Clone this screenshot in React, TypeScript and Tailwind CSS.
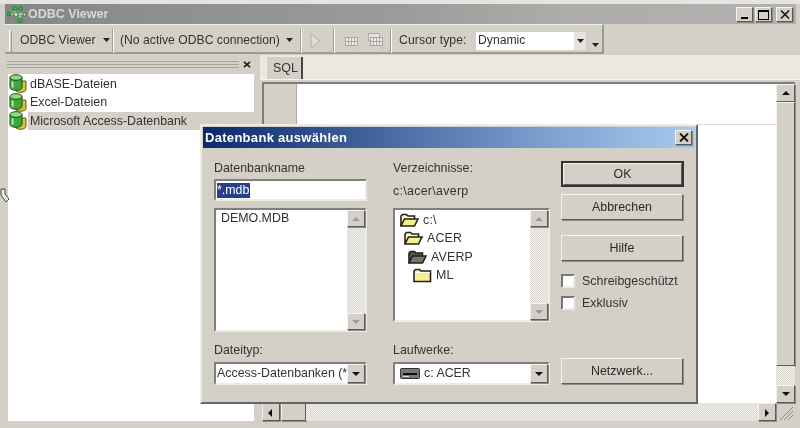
import React from "react";

const sans = "font-['Liberation_Sans',Arial,sans-serif]";
const raised =
  "border border-t-[#f4f3f0] border-l-[#f4f3f0] border-r-[#5c5c5c] border-b-[#5c5c5c] bg-[#d4d0c8] shadow-[1px_1px_0_#8a8a86]";
const sunken =
  "border-2 border-t-[#7f7f7c] border-l-[#7f7f7c] border-r-[#ecebe6] border-b-[#ecebe6] bg-white";
const dither =
  "bg-[repeating-conic-gradient(#f1f0ec_0%_25%,#d9d7d0_0%_50%)] bg-[length:2px_2px]";

const Arrow = ({ dir, muted }: { dir: "up" | "down" | "left" | "right"; muted?: boolean }) => {
  const points = {
    up: "1,6 9,6 5,2",
    down: "1,2 9,2 5,6",
    left: "6,1 6,9 2,5",
    right: "3,1 3,9 7,5",
  }[dir];
  return (
    <svg width="10" height="10" viewBox="0 0 10 8" fill={muted ? "#9a9a96" : "#111"}>
      <polygon points={points} />
    </svg>
  );
};

const ScrollButton = ({
  dir,
  muted,
  className = "w-[18px] h-[18px]",
}: {
  dir: "up" | "down" | "left" | "right";
  muted?: boolean;
  className?: string;
}) => (
  <div className={`${raised} ${className} shrink-0 flex items-center justify-center`}>
    <Arrow dir={dir} muted={muted} />
  </div>
);

const DbIcon = () => (
  <svg width="19" height="19" viewBox="0 0 19 19" className="shrink-0">
    <path d="M6 7v8.500c0 1.500 2.600 2.800 5.500 2.800s5.500-1.300 5.500-2.800V7z" fill="#d9c138" stroke="#5f5820" />
    <path d="M1 3.500v10c0 1.500 2.800 2.800 6 2.800s6-1.300 6-2.800v-10z" fill="#3fa83c" stroke="#1d4a1d" />
    <ellipse cx="7" cy="3.500" rx="6" ry="2.800" fill="#8fdc84" stroke="#1d4a1d" />
    <path d="M3.500 7.500v6" stroke="#b8eeb0" strokeWidth="2" />
  </svg>
);

const Folder = ({ open, dark }: { open?: boolean; dark?: boolean }) => {
  const fill = dark ? "#77766e" : "#f5f08c";
  return (
    <svg width="19" height="15" viewBox="0 0 19 15" className="shrink-0">
      {open ? (
        <>
          <path d="M1 13V3l1.500-1.500h4L8 3h6.500v3" fill={dark ? "#55544e" : "#fbf8c4"} stroke="#222" strokeWidth="1.600" />
          <path d="M1 13l3.500-7h13.500l-3.500 7z" fill={fill} stroke="#222" strokeWidth="1.600" />
        </>
      ) : (
        <>
          <path d="M1 13.500V3l1.500-1.500h4L8 3h9.500v10.500z" fill={fill} stroke="#222" strokeWidth="1.600" />
          <path d="M2 4.500h15" stroke="#fff" />
        </>
      )}
    </svg>
  );
};

const DlgButton = ({ label, className = "h-[26px]" }: { label: string; className?: string }) => (
  <div className={`${raised} ${className} w-[122px] flex items-center justify-center text-[#2a2a2a]`}>
    {label}
  </div>
);

const Check = ({ label }: { label: string }) => (
  <div className="flex items-center gap-[7px] h-[14px] text-[#333] tracking-[0.05px]">
    <div className="w-[14px] h-[14px] border-2 border-t-[#777] border-l-[#777] border-r-[#ecebe6] border-b-[#ecebe6] bg-white" />
    {label}
  </div>
);

const ToolSep = ({ className = "" }: { className?: string }) => (
  <div className={`w-[2px] h-[24px] shrink-0 border-l border-l-[#9a9a96] border-r border-r-white ${className}`} />
);

const GridIcon = ({ stacked }: { stacked?: boolean }) => (
  <svg width="18" height="18" viewBox="0 0 18 18" fill="none" stroke="#a9a9a4">
    {stacked && <rect x="1.500" y="1.500" width="11" height="7" fill="#e6e4de" />}
    <rect x="3.500" y="5.500" width="12" height="8" fill="#eeece6" />
    <path d="M6.500 6v7M9.500 6v7M12.500 6v7M4 9.500h11" />
    <rect x="15" y="15" width="2" height="2" fill="#c0c0ba" stroke="none" />
  </svg>
);

const Caret = () => (
  <svg width="7" height="4" viewBox="0 0 7 4" fill="#222" className="shrink-0">
    <polygon points="0,0 7,0 3.500,4" />
  </svg>
);

export default function App() {
  return (
    <div className={`${sans} relative w-[800px] h-[428px] overflow-hidden bg-[#d4d0c8] blur-[0.5px] flex flex-col`}>
      {/* Window title */}
      <div className="h-[4px] bg-[#e6e4de]" />
      <div className="ml-[5px] mr-[4px] h-[20px] shrink-0 flex items-center justify-between pr-[3px] bg-[linear-gradient(90deg,#858786,#9b9b9b_50%,#acacaa_70%,#b3b2b2_100%)]">
        <div className="flex items-center pl-[1px]">
          <svg width="22" height="20" viewBox="0 0 22 20" fill="none" stroke="#1f8a2a" strokeWidth="1">
            <path d="M4 10h14M9 5v6M14 11v5" stroke="#dfe5dd" />
            <circle cx="9" cy="4.500" r="2" fill="#35b83a" />
            <circle cx="14.500" cy="4.500" r="2" fill="#35b83a" />
            <circle cx="3" cy="10" r="1.800" fill="#35b83a" />
            <circle cx="10" cy="10.500" r="2" fill="#eaeaea" />
            <circle cx="18.500" cy="10.500" r="1.500" fill="#eaeaea" />
            <circle cx="14" cy="16.500" r="2.200" fill="#35b83a" />
          </svg>
          <span className="text-[12.500px] font-bold text-[#d8d8d8] leading-none">ODBC Viewer</span>
        </div>
        <div className="flex gap-[2px] items-center">
          {["min", "max"].map((k) => (
            <div key={k} className={`${raised} w-[17px] h-[15px] flex items-end justify-center`}>
              {k === "min" ? (
                <div className="w-[7px] h-[2px] bg-black mb-[2px]" />
              ) : (
                <div className="w-[11px] h-[10px] border border-black border-t-2 mb-[1px]" />
              )}
            </div>
          ))}
          <div className={`${raised} w-[17px] h-[15px] ml-[2px] flex items-center justify-center`}>
            <svg width="10" height="9" viewBox="0 0 10 9" stroke="#111" strokeWidth="1.500">
              <path d="M1 0.500l8 8M9 0.500l-8 8" />
            </svg>
          </div>
        </div>
      </div>

      {/* Toolbar */}
      <div className="h-[31px] shrink-0 pl-[5px]">
        <div className="w-[599px] h-[30px] flex items-center pl-[4px] pt-[4px] whitespace-nowrap border-t border-t-[#f1f0ec] border-r-2 border-r-[#9a9a96] border-b-2 border-b-[#9a9a96] text-[12.200px] text-[#333]">
          <div className="w-[3px] h-[22px] shrink-0 border border-[#9a9a96] border-l-white border-t-white" />
          <div className="flex items-center gap-[7px] ml-[8px] w-[85px] shrink-0">
            ODBC Viewer
            <Caret />
          </div>
          <ToolSep className="ml-[7px]" />
          <div className="flex items-center gap-[6px] ml-[6px] w-[172px] shrink-0">
            (No active ODBC connection)
            <Caret />
          </div>
          <ToolSep className="ml-[8px]" />
          <svg width="16" height="18" viewBox="0 0 16 18" className="ml-[6px] shrink-0">
            <path d="M3 2l9 7-9 7z" fill="#dedcd6" stroke="#b0b0aa" />
          </svg>
          <ToolSep className="ml-[9px]" />
          <div className="flex gap-[7px] ml-[7px] shrink-0">
            <GridIcon />
            <GridIcon stacked />
          </div>
          <ToolSep className="ml-[5px]" />
          <span className="ml-[7px] w-[69px] shrink-0 tracking-[0.1px]">Cursor type:</span>
          <div className="ml-[8px] w-[110px] h-[18px] shrink-0 bg-white flex items-center justify-between pl-[2px]">
            Dynamic
            <div className="w-[12px] h-[18px] bg-[#e4e2dc] flex items-center justify-center">
              <Caret />
            </div>
          </div>
          <div className="self-end mb-[5px] ml-[6px]">
            <Caret />
          </div>
        </div>
      </div>

      {/* Main area */}
      <div className="flex-1 flex min-h-0 pb-[7px]">
        <LeftPanel />
        <RightPane />
      </div>

      {/* Resize cursor left behind in the capture */}
      <svg width="10" height="20" viewBox="0 0 10 20" className="absolute left-0 top-[186px]" fill="none" stroke="#444">
        <path d="M1 3v6l5 7 3-3-4-5V3z" fill="#eee" />
      </svg>

      <Dialog />
    </div>
  );
}

function LeftPanel() {
  const rows = ["dBASE-Dateien", "Excel-Dateien", "Microsoft Access-Datenbank"];
  return (
    <div className="w-[260px] shrink-0 flex flex-col pl-[8px] pr-[6px]">
      <div className="h-[19px] shrink-0 flex items-center gap-[3px] -ml-[1px] mr-[3px]">
        <div className="flex-1 h-[7px] border-y border-[#a5a39d] relative">
          <div className="absolute left-0 right-0 top-[2px] h-px bg-[#a5a39d]" />
        </div>
        <svg width="8" height="7" viewBox="0 0 9 8" stroke="#222" strokeWidth="2" className="ml-[1px]">
          <path d="M1 1l7 6M8 1l-7 6" />
        </svg>
      </div>
      <div className="flex-1 bg-white pl-[1px] text-[12.400px] text-[#333] flex flex-col">
        {rows.map((label, i) => (
          <div key={label} className="h-[18px] mt-[0.500px] flex items-center gap-0">
            <DbIcon />
            <span className={`${i === 2 ? "bg-[#d4d0c8] flex-1" : ""} leading-[18px] pl-[2px]`}>{label}</span>
          </div>
        ))}
      </div>
    </div>
  );
}

function RightPane() {
  return (
    <div className="flex-1 min-w-0 flex flex-col">
      {/* Tab strip */}
      <div className="h-[25px] shrink-0 bg-[#ece7df] flex items-end border-b border-b-[#f6f5f1]">
        <div className="ml-[7px] w-[36px] h-[22px] bg-[#d4d0c8] border-r-2 border-r-[#444] flex items-center pl-[6px] text-[12.500px] text-[#333]">
          SQL
        </div>
      </div>
      {/* Editor */}
      <div className="flex-1 min-h-0 flex flex-col pr-[5px] pt-[2px] pl-[2px]">
        <div className="flex-1 min-h-0 flex border-t-2 border-l-2 border-[#7d7d7a]">
          <div className="w-[33px] shrink-0 bg-[#d4d0c8] border-r border-r-[#aaa]" />
          <div className="flex-1 min-w-0 bg-white">
            <div className="h-[41px] border-b border-b-[#dddcd8]" />
          </div>
          <div className="w-[19px] shrink-0 flex flex-col bg-[#d4d0c8]">
            <ScrollButton dir="up" className="w-[19px] h-[18px]" />
            <div className={`${raised} w-[19px] h-[264px]`} />
            <div className={`flex-1 ${dither}`} />
            <ScrollButton dir="down" className="w-[19px] h-[18px]" />
          </div>
        </div>
        <div className="h-[18px] shrink-0 flex">
          <ScrollButton dir="left" />
          <div className={`${raised} w-[25px] h-[18px] ml-[1px]`} />
          <div className={`flex-1 ${dither}`} />
          <ScrollButton dir="right" />
          <svg width="19" height="18" viewBox="0 0 19 18" stroke="#8a8a86" fill="none">
            <path d="M4 17L17 4M8 17L17 8M12 17l5-5" />
          </svg>
        </div>
      </div>
    </div>
  );
}

function Dialog() {
  return (
    <div className="absolute left-[200px] top-[124px] w-[498px] h-[280px] bg-[#d4d0c8] border-2 border-t-[#ecebe6] border-l-[#ecebe6] border-r-[#666] border-b-[#666] flex flex-col text-[#333]">
      <div className="mx-[1px] mt-[1px] h-[21px] shrink-0 flex items-center justify-between pl-[2px] pr-[3px] bg-[linear-gradient(90deg,#0a2a6b,#7f9fd0_70%,#a7cbee)]">
        <span className="text-[13px] font-bold text-white tracking-[0.3px]">Datenbank auswählen</span>
        <div className={`${raised} w-[17px] h-[15px] flex items-center justify-center`}>
          <svg width="10" height="9" viewBox="0 0 10 9" stroke="#111" strokeWidth="1.800">
            <path d="M1 0.500l8 8M9 0.500l-8 8" />
          </svg>
        </div>
      </div>

      <div className="flex-1 min-h-0 flex pl-[12px] text-[12.400px]">
        {/* Database column */}
        <div className="w-[153px] shrink-0 flex flex-col pt-[13px]">
          <div className="h-[15px] leading-[15px]">Datenbankname</div>
          <div className={`${sunken} mt-[3px] h-[22px] pl-[1px] flex items-center`}>
            <span className="bg-[#27408b] text-white leading-[15px] w-[33px]">*.mdb</span>
          </div>
          <div className={`${sunken} mt-[7px] h-[124px] flex`}>
            <div className="flex-1 pl-[5px] pt-[1px] leading-[15px]">DEMO.MDB</div>
            <div className={`w-[18px] flex flex-col justify-between ${dither}`}>
              <ScrollButton dir="up" muted className="w-[18px] h-[17px]" />
              <ScrollButton dir="down" muted className="w-[18px] h-[17px]" />
            </div>
          </div>
          <div className="mt-[11px] h-[15px] leading-[15px]">Dateityp:</div>
          <div className={`${sunken} mt-[4px] h-[23px] flex items-center pl-[1px]`}>
            <span className="flex-1 whitespace-nowrap">Access-Datenbanken (*</span>
            <ScrollButton dir="down" className="w-[18px] h-[19px]" />
          </div>
        </div>

        {/* Directory column */}
        <div className="w-[157px] ml-[26px] shrink-0 flex flex-col pt-[13px]">
          <div className="h-[15px] leading-[15px]">Verzeichnisse:</div>
          <div className="mt-[8px] h-[15px] leading-[15px] tracking-[0.3px]">c:\acer\averp</div>
          <div className={`${sunken} mt-[9px] h-[114px] flex`}>
            <div className="flex-1 pl-[5px] pt-[1px] flex flex-col">
              <TreeRow className="pl-0" label="c:\" folder={<Folder open />} />
              <TreeRow className="pl-[4px]" label="ACER" folder={<Folder open />} />
              <TreeRow className="pl-[8px]" label="AVERP" folder={<Folder open dark />} />
              <TreeRow className="pl-[13px]" label="ML" folder={<Folder />} />
            </div>
            <div className={`w-[18px] flex flex-col justify-between ${dither}`}>
              <ScrollButton dir="up" muted className="w-[18px] h-[17px]" />
              <ScrollButton dir="down" muted className="w-[18px] h-[17px]" />
            </div>
          </div>
          <div className="mt-[21px] h-[15px] leading-[15px]">Laufwerke:</div>
          <div className={`${sunken} mt-[4px] h-[23px] flex items-center pl-[5px]`}>
            <svg width="20" height="11" viewBox="0 0 20 11" className="shrink-0">
              <rect x="0.500" y="0.500" width="19" height="10" rx="1" fill="#777" stroke="#333" />
              <rect x="3" y="5" width="14" height="2" fill="#111" />
              <rect x="3" y="8" width="6" height="1" fill="#ddd" />
            </svg>
            <span className="flex-1 pl-[4px]">c: ACER</span>
            <ScrollButton dir="down" className="w-[18px] h-[19px]" />
          </div>
        </div>

        {/* Actions column */}
        <div className="w-[123px] ml-[11px] shrink-0 flex flex-col pt-[13px]">
          <div className="border-2 border-[#333] w-[123px] h-[26px] flex">
            <div className={`${raised} flex-1 flex items-center justify-center text-[#2a2a2a] shadow-none`}>OK</div>
          </div>
          <DlgButton label="Abbrechen" className="h-[26px] mt-[7px]" />
          <DlgButton label="Hilfe" className="h-[26px] mt-[15px]" />
          <div className="mt-[13px] flex flex-col gap-[8px]">
            <Check label="Schreibgeschützt" />
            <Check label="Exklusiv" />
          </div>
          <DlgButton label="Netzwerk..." className="h-[26px] mt-[48px]" />
        </div>
      </div>
    </div>
  );
}

const TreeRow = ({ className, label, folder }: { className: string; label: string; folder: React.ReactNode }) => (
  <div className={`h-[18.500px] flex items-center gap-[4px] text-[#333] tracking-[0.2px] ${className}`}>
    {folder}
    {label}
  </div>
);
